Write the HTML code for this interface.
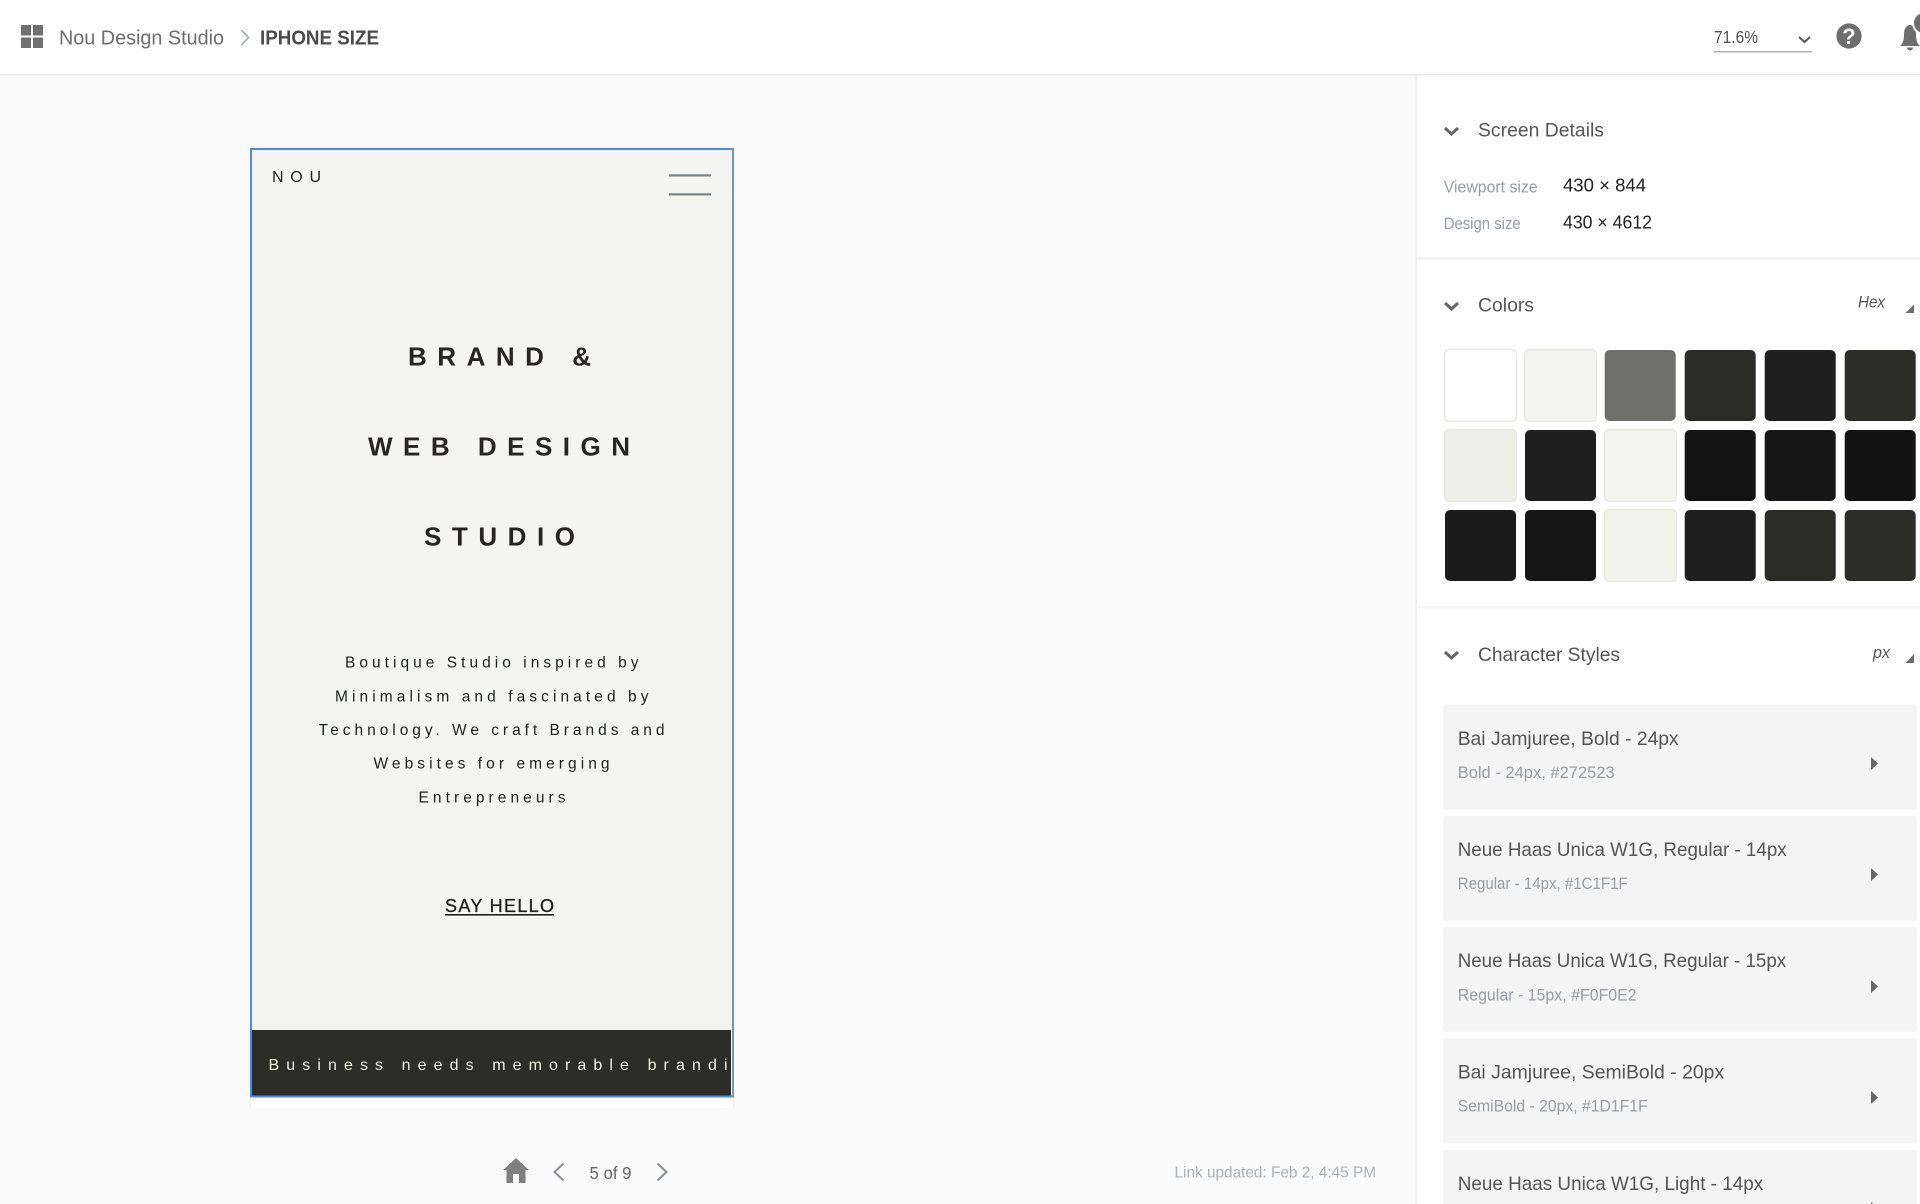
<!DOCTYPE html>
<html lang="en">
<head>
<meta charset="utf-8">
<title>Nou Design Studio - IPHONE SIZE</title>
<style>
html,body{margin:0;padding:0;background:#fafafa;width:1920px;height:1204px;overflow:hidden}
svg{display:block}
text{font-family:"Liberation Sans",Arial,sans-serif;white-space:pre}
.ui{font-size:19.5px;fill:#555}
.sm{font-size:17px;fill:#979da3}
.ttl{font-size:19.5px;fill:#555}
.sub{font-size:17px;fill:#979da3}
.h{font-size:26px;font-weight:bold;fill:#272523}
.p{font-size:15.5px;fill:#1c1f1f}
.chev{fill:none;stroke:#666;stroke-width:3}
</style>
</head>
<body>
<svg width="1920" height="1204" viewBox="0 0 1920 1204" xmlns="http://www.w3.org/2000/svg">
<rect width="1920" height="1204" fill="#fafafa"/>
<!-- top bar -->
<rect width="1920" height="74" fill="#fff"/>
<rect y="74" width="1920" height="1.5" fill="#e8e8e8"/>
<g fill="#707070">
<rect x="21" y="25" width="10" height="10.5"/><rect x="33" y="25" width="10" height="10.5"/>
<rect x="21" y="37.5" width="10" height="10.5"/><rect x="33" y="37.5" width="10" height="10.5"/>
</g>
<text x="59" y="44.5" font-size="20.5" fill="#6e6e6e" textLength="165" lengthAdjust="spacingAndGlyphs">Nou Design Studio</text>
<path d="M241.5 30L248.5 37.5L241.5 45" fill="none" stroke="#a0a8ae" stroke-width="1.6"/>
<text x="260" y="44.5" font-size="20.5" font-weight="bold" fill="#4b4b4b" textLength="119" lengthAdjust="spacingAndGlyphs">IPHONE SIZE</text>
<text x="1714" y="43" font-size="17.5" fill="#505050" textLength="44" lengthAdjust="spacingAndGlyphs">71.6%</text>
<rect x="1714" y="51" width="98" height="1.5" fill="#b0b0b0"/>
<path d="M1799 37L1804.5 42L1810 37" fill="none" stroke="#555" stroke-width="2"/>
<circle cx="1849" cy="36" r="12.6" fill="#6e6e6e"/>
<text x="1849" y="44" font-size="22" font-weight="bold" fill="#fff" text-anchor="middle">?</text>
<path d="M1900 46C1903.5 43 1904 39 1904 34C1904 28 1907 25 1910 25C1913 25 1916 28 1916 34C1916 39 1916.5 43 1920 46Z" fill="#6e6e6e"/>
<path d="M1907 47.5h6a3 3 0 0 1-6 0Z" fill="#6e6e6e"/>
<circle cx="1924" cy="23" r="12" fill="#fff"/>
<circle cx="1924" cy="23" r="10" fill="#6e6e6e"/>

<!-- phone artboard -->
<rect x="250" y="1090" width="484" height="18" fill="#fff"/>
<rect x="250" y="1090" width="1" height="18" fill="#ececec"/>
<rect x="733" y="1090" width="1" height="18" fill="#ececec"/>
<rect x="251" y="149" width="482" height="947" fill="#f4f5f0"/>
<rect x="252" y="1030" width="479" height="66" fill="#2d2d28"/>
<rect x="251" y="149" width="482" height="947.5" fill="none" stroke="#4a8ae8" stroke-width="2"/>
<rect x="732" y="148" width="2" height="949" fill="#6f95cc"/>
<text class="p" x="272" y="182" style="font-size:16px" textLength="49">NOU</text>
<rect x="669" y="174.3" width="42" height="2.2" fill="#7a8388"/>
<rect x="669" y="193.3" width="42" height="2.2" fill="#7a8388"/>
<text class="h" x="408" y="365.700" textLength="183">BRAND &amp;</text>
<text class="h" x="368" y="455.400" textLength="262">WEB DESIGN</text>
<text class="h" x="424" y="545.400" textLength="151">STUDIO</text>
<text class="p" x="345" y="667.700" textLength="293.500">Boutique Studio inspired by</text>
<text class="p" x="335" y="701.300" textLength="313.500">Minimalism and fascinated by</text>
<text class="p" x="318.500" y="735" textLength="346">Technology. We craft Brands and</text>
<text class="p" x="373.500" y="768.700" textLength="236">Websites for emerging</text>
<text class="p" x="418.500" y="802.300" textLength="147">Entrepreneurs</text>
<text x="445" y="912" font-size="18" fill="#1f1f1f" stroke="#1f1f1f" stroke-width="0.3" textLength="109">SAY HELLO</text>
<rect x="445" y="914" width="109" height="1.600" fill="#1f1f1f"/>
<svg x="252" y="1030" width="479" height="66" viewBox="252 1030 479 66">
<text x="268.500" y="1070" font-size="16" fill="#f0f0e2" textLength="459">Business needs memorable brandi</text>
</svg>

<!-- pager -->
<path d="M516 1158L529 1170H525.500V1183H519V1174H513V1183H506.500V1170H503Z" fill="#808080"/>
<path d="M563.500 1163.500L554.500 1172L563.500 1180.500" fill="none" stroke="#8a8f93" stroke-width="2"/>
<text x="589.500" y="1179" font-size="17.500" fill="#666" textLength="42" lengthAdjust="spacingAndGlyphs">5 of 9</text>
<path d="M657.500 1163.500L666.500 1172L657.500 1180.500" fill="none" stroke="#8a8f93" stroke-width="2"/>
<text x="1174.500" y="1177.700" font-size="16" fill="#aab2b8" textLength="201.500" lengthAdjust="spacingAndGlyphs">Link updated: Feb 2, 4:45 PM</text>

<!-- sidebar -->
<rect x="1417" y="75.500" width="503" height="1129" fill="#fff"/>
<rect x="1415.500" y="75.500" width="1.500" height="1129" fill="#eeeee9"/>
<path class="chev" d="M1445 128L1451.500 134L1458 128"/>
<text class="ui" x="1478" y="136.500" textLength="126" lengthAdjust="spacingAndGlyphs">Screen Details</text>
<text class="sm" x="1443.700" y="192.700" textLength="94" lengthAdjust="spacingAndGlyphs">Viewport size</text>
<text x="1563" y="191.700" font-size="18" fill="#222" textLength="83" lengthAdjust="spacingAndGlyphs">430 × 844</text>
<text class="sm" x="1443.700" y="229" textLength="77" lengthAdjust="spacingAndGlyphs">Design size</text>
<text x="1563" y="228.700" font-size="18" fill="#222" textLength="89" lengthAdjust="spacingAndGlyphs">430 × 4612</text>
<rect x="1417" y="257" width="503" height="3" fill="#f4f4f4"/>

<path class="chev" d="M1445 303L1451.500 309L1458 303"/>
<text class="ui" x="1478" y="311.500" textLength="56" lengthAdjust="spacingAndGlyphs">Colors</text>
<text x="1858" y="307.500" font-size="17" font-style="italic" fill="#555" textLength="27" lengthAdjust="spacingAndGlyphs">Hex</text>
<path d="M1914 304.500V313H1905.500Z" fill="#6e6e6e"/>

<g stroke-width="1.500">
<rect x="1444.500" y="349.500" width="72" height="72" rx="5" fill="#fff" stroke="#e8e8e4"/>
<rect x="1524.500" y="349.500" width="72" height="72" rx="5" fill="#f3f4ef" stroke="#e8e8e4"/>
<rect x="1604.700" y="350" width="71" height="71" rx="5" fill="#6f6f6d"/>
<rect x="1684.700" y="350" width="71" height="71" rx="5" fill="#2b2b28"/>
<rect x="1764.700" y="350" width="71" height="71" rx="5" fill="#1f1f1f"/>
<rect x="1844.700" y="350" width="71" height="71" rx="5" fill="#2d2d28"/>
<rect x="1444.500" y="429.500" width="72" height="72" rx="5" fill="#eeeee9" stroke="#e8e8e4"/>
<rect x="1525" y="430" width="71" height="71" rx="5" fill="#1f1f1f"/>
<rect x="1604.500" y="429.500" width="72" height="72" rx="5" fill="#f3f4ef" stroke="#e8e8e4"/>
<rect x="1684.700" y="430" width="71" height="71" rx="5" fill="#141414"/>
<rect x="1764.700" y="430" width="71" height="71" rx="5" fill="#171717"/>
<rect x="1844.700" y="430" width="71" height="71" rx="5" fill="#131313"/>
<rect x="1445" y="510" width="71" height="71" rx="5" fill="#1b1b1b"/>
<rect x="1525" y="510" width="71" height="71" rx="5" fill="#161616"/>
<rect x="1604.500" y="509.500" width="72" height="72" rx="5" fill="#f1f2ec" stroke="#e8e8e4"/>
<rect x="1684.700" y="510" width="71" height="71" rx="5" fill="#1e1e1e"/>
<rect x="1764.700" y="510" width="71" height="71" rx="5" fill="#2c2c27"/>
<rect x="1844.700" y="510" width="71" height="71" rx="5" fill="#2c2d29"/>
</g>
<rect x="1417" y="606" width="503" height="2.500" fill="#f4f4f4"/>

<path class="chev" d="M1445 652L1451.500 658L1458 652"/>
<text class="ui" x="1478" y="661" textLength="142" lengthAdjust="spacingAndGlyphs">Character Styles</text>
<text x="1873" y="658" font-size="17" font-style="italic" fill="#555" textLength="17" lengthAdjust="spacingAndGlyphs">px</text>
<path d="M1914 654V663H1905.500Z" fill="#6e6e6e"/>

<rect x="1443" y="704.500" width="474" height="105" rx="3" fill="#f4f4f4"/>
<text class="ttl" x="1457.700" y="745" textLength="221" lengthAdjust="spacingAndGlyphs">Bai Jamjuree, Bold - 24px</text>
<text class="sub" x="1457.700" y="778" textLength="157" lengthAdjust="spacingAndGlyphs">Bold - 24px, #272523</text>
<path d="M1871 757L1878 763.500L1871 770Z" fill="#666"/>

<rect x="1443" y="816" width="474" height="104.700" rx="3" fill="#f4f4f4"/>
<text class="ttl" x="1457.700" y="856" textLength="329" lengthAdjust="spacingAndGlyphs">Neue Haas Unica W1G, Regular - 14px</text>
<text class="sub" x="1457.700" y="889" textLength="170" lengthAdjust="spacingAndGlyphs">Regular - 14px, #1C1F1F</text>
<path d="M1871 868L1878 874.500L1871 881Z" fill="#666"/>

<rect x="1443" y="927" width="474" height="104.700" rx="3" fill="#f4f4f4"/>
<text class="ttl" x="1457.700" y="967" textLength="328.500" lengthAdjust="spacingAndGlyphs">Neue Haas Unica W1G, Regular - 15px</text>
<text class="sub" x="1457.700" y="1000.700" textLength="179" lengthAdjust="spacingAndGlyphs">Regular - 15px, #F0F0E2</text>
<path d="M1871 980L1878 986.500L1871 993Z" fill="#666"/>

<rect x="1443" y="1038.700" width="474" height="104.700" rx="3" fill="#f4f4f4"/>
<text class="ttl" x="1457.700" y="1078.700" textLength="266.500" lengthAdjust="spacingAndGlyphs">Bai Jamjuree, SemiBold - 20px</text>
<text class="sub" x="1457.700" y="1111.700" textLength="190" lengthAdjust="spacingAndGlyphs">SemiBold - 20px, #1D1F1F</text>
<path d="M1871 1091L1878 1097.500L1871 1104Z" fill="#666"/>

<rect x="1443" y="1150" width="474" height="70" rx="3" fill="#f4f4f4"/>
<text class="ttl" x="1457.700" y="1190" textLength="305.500" lengthAdjust="spacingAndGlyphs">Neue Haas Unica W1G, Light - 14px</text>
<path d="M1871 1202L1878 1208.500L1871 1215Z" fill="#666"/>
</svg>
</body>
</html>
